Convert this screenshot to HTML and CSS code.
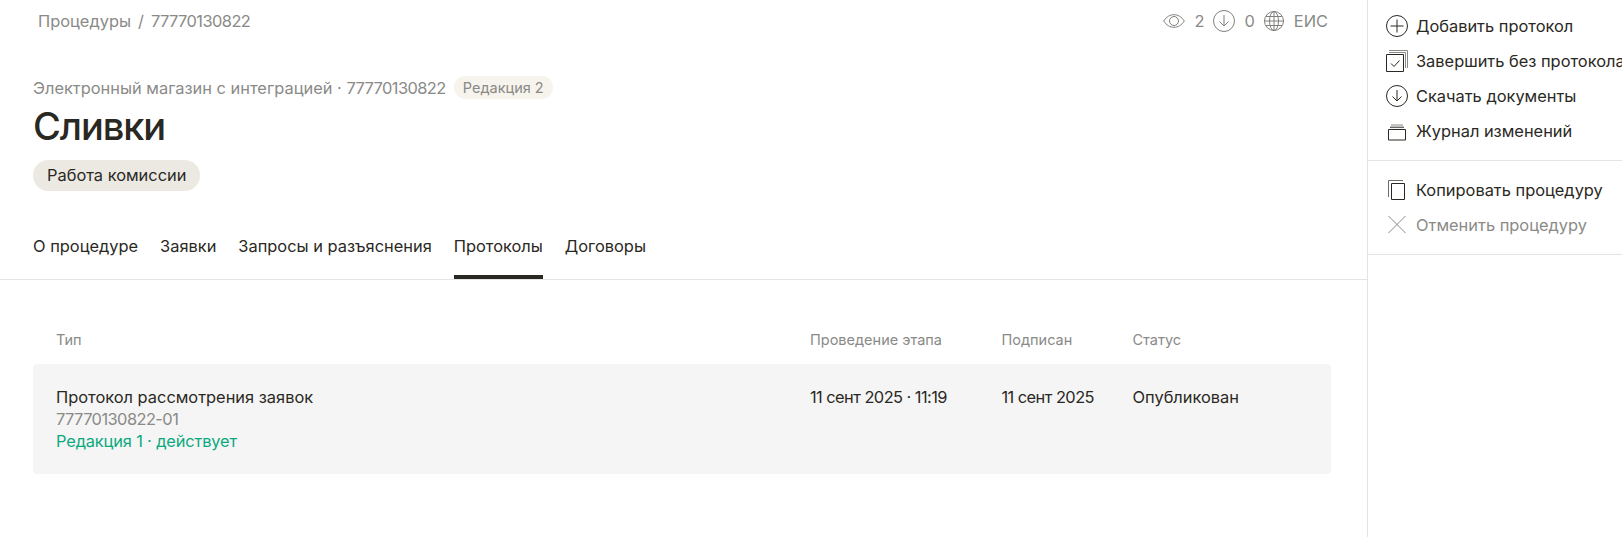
FILE: index.html
```html
<!DOCTYPE html>
<html lang="ru">
<head>
  <meta charset="utf-8"/>
  <meta name="viewport" content="width=device-width,initial-scale=1"/>
  <title>Сливки</title>
  <link rel="stylesheet" href="styles.css">
</head>
<body>
  <div class="page">
    <main class="main">
      <div class="topbar">
        <nav class="crumbs"><span>Процедуры</span><span class="crumb-sep">/</span><span class="num">77770130822</span></nav>
        <div class="stats">
          <svg class="stat-eye" width="22" height="14" viewBox="0 0 22 14" fill="none" stroke="#7f7f7c"><path d="M.7 7C3.500 2.700 7 .7 11 .7s7.500 2 10.300 6.300c-2.800 4.300-6.300 6.300-10.300 6.300S3.500 11.300.7 7z"/><circle cx="11" cy="7" r="4.500"/></svg>
          <span class="stat-num">2</span>
          <svg width="22" height="22" viewBox="0 0 22 22" fill="none" stroke="#7f7f7c"><circle cx="11" cy="11" r="10.500"/><path d="M11 5v11M6.500 11.500 11 16l4.500-4.500"/></svg>
          <span class="stat-num">0</span>
          <svg width="20" height="20" viewBox="0 0 20 20" fill="none" stroke="#7f7f7c"><circle cx="10" cy="10" r="9.500"/><ellipse cx="10" cy="10" rx="4.500" ry="9.500"/><path d="M10 .5v19M.5 10h19M2 5.500h16M2 14.500h16"/></svg>
          <span class="stat-eis">ЕИС</span>
        </div>
      </div>

      <header class="head">
        <div class="head-sub">
          <span>Электронный магазин с интеграцией · <span class="num">77770130822</span></span>
          <span class="rev-badge">Редакция 2</span>
        </div>
        <h1>Сливки</h1>
        <span class="status-pill">Работа комиссии</span>
      </header>

      <nav class="tabs">
        <a class="tab">О процедуре</a>
        <a class="tab">Заявки</a>
        <a class="tab">Запросы и разъяснения</a>
        <a class="tab tab-active">Протоколы</a>
        <a class="tab">Договоры</a>
      </nav>

      <section class="table">
        <div class="row row-head">
          <div>Тип</div>
          <div>Проведение этапа</div>
          <div>Подписан</div>
          <div>Статус</div>
        </div>
        <div class="row row-item">
          <div>
            Протокол рассмотрения заявок
            <div class="muted num">77770130822-01</div>
            <div class="green">Редакция 1 · действует</div>
          </div>
          <div class="num">11 сент 2025 · 11:19</div>
          <div class="num">11 сент 2025</div>
          <div>Опубликован</div>
        </div>
      </section>
    </main>

    <aside class="side">
      <div class="side-group side-group-first">
        <a class="side-item">
          <svg width="22" height="22" viewBox="0 0 22 22" fill="none" stroke="#2a2823"><circle cx="11" cy="11" r="10.500"/><path d="M11 4.500v13M4.500 11h13"/></svg>
          Добавить протокол
        </a>
        <a class="side-item">
          <svg width="22" height="22" viewBox="0 0 22 22" fill="none" stroke="#2a2823"><path d="M.5 4.500h17v17H.5z"/><path d="M5 13.500l3 3 5.500-6"/><path d="M3 2.500h16.500V18" stroke="#8a8a87"/><path d="M3 .5h18.500V18" stroke="#8a8a87"/></svg>
          Завершить без протокола
        </a>
        <a class="side-item">
          <svg width="22" height="22" viewBox="0 0 22 22" fill="none" stroke="#2a2823"><circle cx="11" cy="11" r="10.500"/><path d="M11 5v11M6.500 11.500 11 16l4.500-4.500"/></svg>
          Скачать документы
        </a>
        <a class="side-item">
          <svg width="22" height="22" viewBox="0 0 22 22" fill="none" stroke="#2a2823"><path d="M2.500 9.500h17v10.500h-17z"/><path d="M4 7.300h14" stroke="#6b6b68" stroke-width="1.500"/><path d="M5 5h12" stroke="#8a8a87"/></svg>
          Журнал изменений
        </a>
      </div>
      <div class="side-group">
        <a class="side-item">
          <svg width="22" height="22" viewBox="0 0 22 22" fill="none" stroke="#2a2823"><path d="M5.500 4.500h13v16h-13z"/><path d="M2.500 18V1.500H17" stroke="#6b6b68"/></svg>
          Копировать процедуру
        </a>
        <a class="side-item side-item-off">
          <svg width="22" height="22" viewBox="0 0 22 22" fill="none" stroke="#8a8a87"><path d="M2.500 2l17 17M19.500 2l-17 17"/></svg>
          Отменить процедуру
        </a>
      </div>
    </aside>
  </div>
</body>
</html>
```

FILE: styles.css
```css
html, body {
  margin: 0;
  height: 100%;
  overflow: hidden;
}
body {
  font-family: Inter, sans-serif;
  font-size: 16.4px;
  line-height: 22px;
  color: #2a2823;
  background: #fff;
}
svg {
  flex: none;
}
.num {
  letter-spacing: -.55px;
}
.page {
  display: flex;
  height: 537px;
}
.main {
  flex: none;
  width: 1367px;
}
.topbar {
  display: flex;
  justify-content: space-between;
  align-items: center;
  height: 42px;
  padding: 0 39px 0 38px;
  color: #8a8a87;
}
.crumb-sep {
  margin: 0 7px;
}
.stats {
  display: flex;
  align-items: center;
}
.stat-num {
  margin: 0 9px;
}
.stat-eis {
  margin-left: 10px;
}
.head {
  padding: 34px 33px 0;
}
.head-sub {
  display: flex;
  align-items: center;
  gap: 8px;
  height: 23px;
  color: #8a8a87;
}
.rev-badge {
  padding: 0 9px;
  height: 23px;
  border-radius: 12px;
  background: #f7f3ed;
  font-size: 14.5px;
  line-height: 23px;
}
h1 {
  margin: 3px 0 10px;
  font-size: 38px;
  line-height: 48px;
  font-weight: 500;
  letter-spacing: -1.1px;
}
.status-pill {
  display: inline-block;
  padding: 0 14px;
  height: 31px;
  line-height: 31px;
  border-radius: 16px;
  background: #ece9e3;
}
.tabs {
  display: flex;
  gap: 22px;
  margin-top: 38px;
  padding: 0 33px;
  border-bottom: 1px solid #e4e4e4;
}
.tab {
  height: 50px;
  line-height: 34px;
  box-sizing: border-box;
}
.tab-active {
  border-bottom: 4px solid #2a2823;
}
.table {
  padding: 50px 36px 0 33px;
}
.row {
  display: grid;
  grid-template-columns: 754px 191.5px 131px 1fr;
  padding: 0 23px;
}
.row-head {
  height: 34px;
  font-size: 14.5px;
  line-height: 20px;
  color: #8a8a87;
}
.row-item {
  padding-top: 22px;
  padding-bottom: 22px;
  border-radius: 4px;
  background: #f5f5f5;
}
.muted {
  color: #8a8a87;
}
.green {
  color: #0aa97d;
  letter-spacing: -.15px;
}
.side {
  flex: 1;
  min-width: 0;
  border-left: 1px solid #e4e4e4;
  overflow: hidden;
}
.side-group {
  padding: 11px 0 12px 18px;
  border-bottom: 1px solid #e4e4e4;
}
.side-group-first {
  padding-top: 8px;
  padding-bottom: 12px;
}
.side-item {
  display: flex;
  align-items: center;
  gap: 8px;
  height: 35px;
  white-space: nowrap;
}
.side-item-off {
  color: #8a8a87;
}
```
